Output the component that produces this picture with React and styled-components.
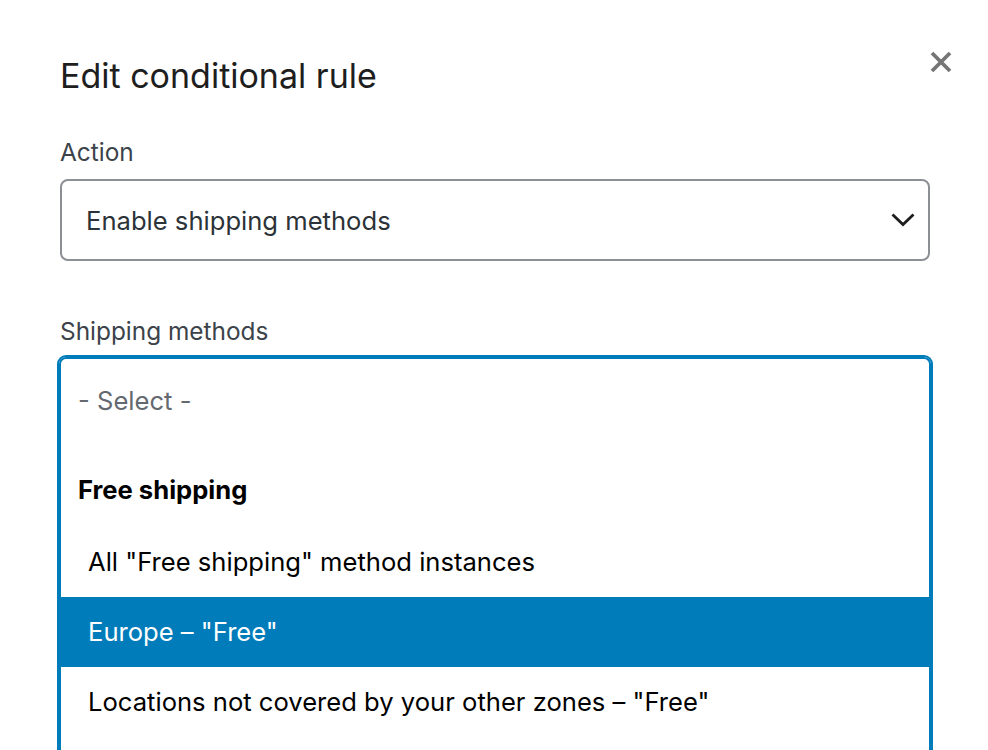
import React from "react";
import styled, { createGlobalStyle } from "styled-components";

const GlobalStyle = createGlobalStyle`
  html, body {
    margin: 0;
    padding: 0;
    background: #fff;
    font-family: Inter, "Noto Sans", "Liberation Sans", sans-serif;
  }
  * { box-sizing: border-box; }
`;

const Page = styled.div`
  width: 988px;
  height: 750px;
  overflow: hidden;
  padding: 52px 0 0 59px;
  background: #fff;
`;

const Header = styled.div`
  display: flex;
  justify-content: space-between;
  align-items: flex-start;
  padding-right: 35px;
`;

const Title = styled.h1`
  margin: 2px 0 -2px;
  font-size: 34px;
  line-height: 44px;
  font-weight: 400;
  color: #1e1e1e;
  padding-left: 1px;
`;

const CloseButton = styled.button`
  width: 24px;
  height: 24px;
  margin-top: -2px;
  padding: 0;
  border: 0;
  background: none;
  display: flex;
  align-items: center;
  justify-content: center;
  cursor: pointer;
`;

const Form = styled.div`
  width: 872px;
  display: flex;
  flex-direction: column;
`;

const Label = styled.label`
  display: block;
  margin: ${(p) => p.top}px 0 ${(p) => p.bottom}px 1px;
  font-size: 24.4px;
  line-height: 32px;
  color: #3c434a;
`;

const SelectBox = styled.div`
  margin: 0 1px;
  height: 82px;
  border: 2px solid #8c8f94;
  border-radius: 8px;
  display: flex;
  align-items: center;
  justify-content: space-between;
  padding: 0 13px 0 24px;
  font-size: 25.6px;
  color: #2c3338;
`;

const ListBox = styled.div`
  border: 2px solid #007cba;
  box-shadow: 0 0 0 2px #007cba;
  border-radius: 7px;
  height: 420px;
  overflow: hidden;
`;

const Placeholder = styled.div`
  height: 82px;
  display: flex;
  align-items: center;
  padding-left: 17px;
  font-size: 25.6px;
  color: #646970;
`;

const Group = styled.div`
  height: 86px;
  padding: 11px 0 0 17px;
  display: flex;
  align-items: center;
  font-size: 25.6px;
  font-weight: 700;
  color: #000;
`;

const Option = styled.div`
  height: 70px;
  display: flex;
  align-items: center;
  padding: 0 0 2px 27px;
  font-size: 25.6px;
  color: ${(p) => (p.selected ? "#fff" : "#000")};
  background: ${(p) => (p.selected ? "#007cba" : "transparent")};
`;

const options = [
  'All "Free shipping" method instances',
  'Europe – "Free"',
  'Locations not covered by your other zones – "Free"',
];

export default function App() {
  return (
    <>
      <GlobalStyle />
      <Page>
        <Header>
          <Title>Edit conditional rule</Title>
          <CloseButton aria-label="Close">
            <svg width="24" height="24" viewBox="0 0 24 24">
              <path
                d="M3 3 L21 21 M21 3 L3 21"
                stroke="#757575"
                strokeWidth="3.8"
                strokeLinecap="butt"
              />
            </svg>
          </CloseButton>
        </Header>
        <Form>
          <Label top={40} bottom={11}>Action</Label>
          <SelectBox>
            <span>Enable shipping methods</span>
            <svg width="24" height="14" viewBox="0 0 24 14">
              <path d="M1.5 1.5 L12 11.5 L22.5 1.5" fill="none" stroke="#1e1e1e" strokeWidth="2.8" />
            </svg>
          </SelectBox>
          <Label top={54} bottom={10}>Shipping methods</Label>
          <ListBox>
            <Placeholder>- Select -</Placeholder>
            <Group>Free shipping</Group>
            {options.map((o, i) => (
              <Option key={o} selected={i === 1}>
                {o}
              </Option>
            ))}
          </ListBox>
        </Form>
      </Page>
    </>
  );
}
